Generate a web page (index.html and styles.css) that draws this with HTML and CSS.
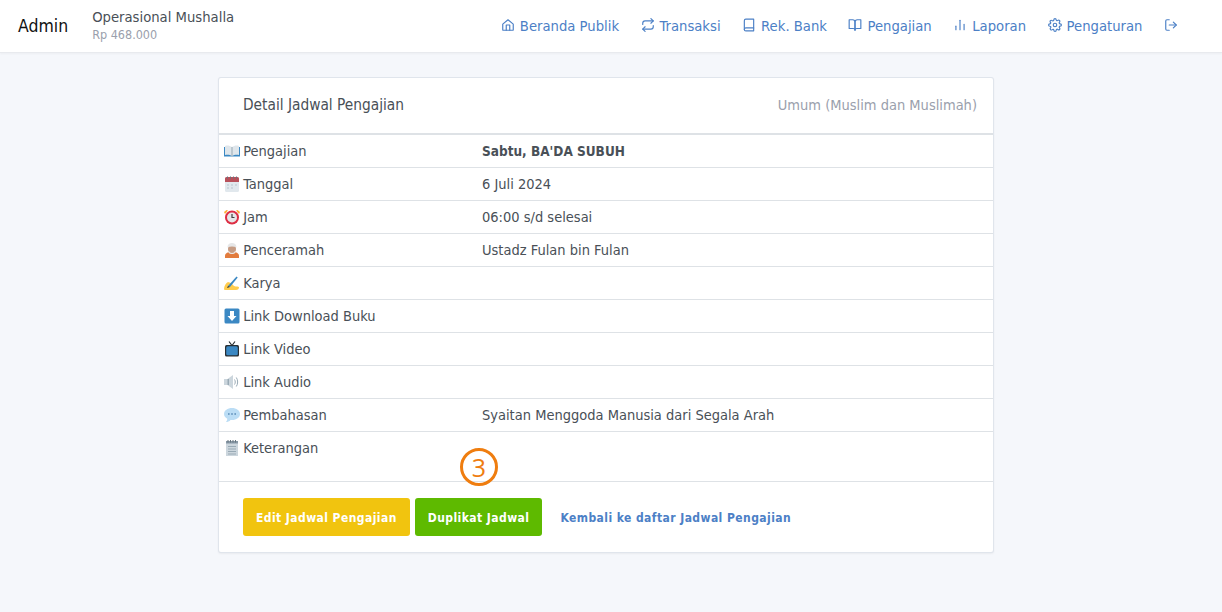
FILE: index.html
```html
<!DOCTYPE html>
<html lang="en">
  <head>
    <meta charset="UTF-8" />
    <title>Detail Jadwal Pengajian</title>
    <link rel="stylesheet" href="styles.css">
  </head>

  <body>
    <header class="topbar">
      <a class="brand">Admin</a>
      <div class="account">
        <div class="account-name">Operasional Mushalla</div>
        <div class="account-saldo">Rp 468.000</div>
      </div>
      <nav class="nav">
        <a class="nav-link">
          <svg class="ico" viewBox="0 0 24 24"><path d="M3 10.500 12 3l9 7.500V20a1 1 0 0 1-1 1H4a1 1 0 0 1-1-1z"/><path d="M9 21v-9h6v9"/></svg>
          Beranda Publik
        </a>
        <a class="nav-link">
          <svg class="ico" viewBox="0 0 24 24"><path d="m17 1 4 4-4 4"/><path d="M3 11V9a4 4 0 0 1 4-4h14"/><path d="m7 23-4-4 4-4"/><path d="M21 13v2a4 4 0 0 1-4 4H3"/></svg>
          Transaksi
        </a>
        <a class="nav-link">
          <svg class="ico" viewBox="0 0 24 24"><path d="M4 19.500A2.500 2.500 0 0 1 6.500 17H20"/><path d="M6.500 2H20v20H6.500A2.500 2.500 0 0 1 4 19.500v-15A2.500 2.500 0 0 1 6.500 2z"/></svg>
          Rek. Bank
        </a>
        <a class="nav-link">
          <svg class="ico" viewBox="0 0 24 24"><path d="M2 3h6a4 4 0 0 1 4 4v14a3 3 0 0 0-3-3H2z"/><path d="M22 3h-6a4 4 0 0 0-4 4v14a3 3 0 0 1 3-3h7z"/></svg>
          Pengajian
        </a>
        <a class="nav-link">
          <svg class="ico" viewBox="0 0 24 24"><path d="M12 20V4"/><path d="M19 20v-9"/><path d="M5 20v-6"/></svg>
          Laporan
        </a>
        <a class="nav-link">
          <svg class="ico" viewBox="0 0 24 24"><circle cx="12" cy="12" r="3"/><path d="M19.400 15a1.650 1.650 0 0 0 .33 1.820l.06.06a2 2 0 1 1-2.830 2.830l-.06-.06a1.650 1.650 0 0 0-2.820 1.170V21a2 2 0 1 1-4 0v-.09a1.650 1.650 0 0 0-2.820-1.110l-.06.06a2 2 0 1 1-2.830-2.830l.06-.06a1.650 1.650 0 0 0-1.170-2.820H3a2 2 0 1 1 0-4h.09a1.650 1.650 0 0 0 1.110-2.820l-.06-.06a2 2 0 1 1 2.830-2.830l.06.06a1.650 1.650 0 0 0 1.820.33H9a1.650 1.650 0 0 0 1-1.510V3a2 2 0 1 1 4 0v.09a1.650 1.650 0 0 0 2.820 1.110l.06-.06a2 2 0 1 1 2.830 2.830l-.06.06a1.650 1.650 0 0 0-.33 1.820V9a1.650 1.650 0 0 0 1.510 1H21a2 2 0 1 1 0 4h-.09a1.650 1.650 0 0 0-1.510 1z"/></svg>
          Pengaturan
        </a>
        <a class="nav-link">
          <svg class="ico" viewBox="0 0 24 24"><path d="M9 21H5a2 2 0 0 1-2-2V5a2 2 0 0 1 2-2h4"/><path d="m16 17 5-5-5-5"/><path d="M21 12H9"/></svg>
        </a>
      </nav>
    </header>

    <main class="page">
      <section class="card">
        <div class="card-header">
          <h3 class="card-title">Detail Jadwal Pengajian</h3>
          <div class="card-options">Umum (Muslim dan Muslimah)</div>
        </div>

        <table class="detail">
          <tr>
            <td class="label">
              <svg class="emoji" viewBox="0 0 16 16"><path fill="#3b88c3" d="M0 4h16v9.500H0z"/><path fill="#dfe6eb" d="M1 3c3-1 5 0 7 1 2-1 4-2 7-1v9c-3-.6-5 0-7 1-2-1-4-1.600-7-1z"/><path fill="#99aab5" d="M7.500 4h1v9h-1z"/></svg>
              Pengajian
            </td>
            <td><strong>Sabtu, BA'DA SUBUH</strong></td>
          </tr>
          <tr>
            <td class="label">
              <svg class="emoji" viewBox="0 0 16 16"><rect x="1" y="1" width="14" height="15" rx="1.500" fill="#e1e8ed"/><path fill="#b8505a" d="M1 2.500A1.500 1.500 0 0 1 2.500 1h11A1.500 1.500 0 0 1 15 2.500V6H1z"/><path fill="#ccd6dd" d="M3 8h2v2H3zm4 0h2v2H7zm4 0h2v2h-2zm-8 3h2v2H3zm4 0h2v2H7z"/><path fill="#66757f" d="M3 .500h1v2H3zm3 0h1v2H6zm3 0h1v2H9zm3 0h1v2h-1z"/></svg>
              Tanggal
            </td>
            <td>6 Juli 2024</td>
          </tr>
          <tr>
            <td class="label">
              <svg class="emoji" viewBox="0 0 16 16"><path fill="#ffac33" d="M1 5 4 1.500 2.500 1 0 3zm14 0-3-3.500L13.500 1 16 3z"/><circle cx="8" cy="8.500" r="7" fill="#dd2e44"/><circle cx="8" cy="8.500" r="5" fill="#e6e7e8"/><path fill="none" stroke="#414042" stroke-width="1.200" d="M8 5v3.500h2.500"/></svg>
              Jam
            </td>
            <td>06:00 s/d selesai</td>
          </tr>
          <tr>
            <td class="label">
              <svg class="emoji" viewBox="0 0 16 16"><path fill="#e27c3e" d="M1 16v-2c0-2.500 2-4 7-4s7 1.500 7 4v2z"/><circle cx="8" cy="7" r="4" fill="#c69c84"/><path fill="#e6e7e8" d="M3.500 5.500C3.500 2 6 1 8 1s4.500 1 4.500 4.500C10 4 6 4 3.500 5.500z"/><path fill="#e6e7e8" d="M5 9c1 2.500 5 2.500 6 0l.5 1.500c-1.500 2-5.500 2-7 0z"/></svg>
              Penceramah
            </td>
            <td>Ustadz Fulan bin Fulan</td>
          </tr>
          <tr>
            <td class="label">
              <svg class="emoji" viewBox="0 0 16 16"><path fill="#ffcc4d" d="M0 14c0-3 2-6 4-7l3 1 2 2c1 2 4 1 6 2 0 2-1 3-3 3H2c-1 0-2 0-2-1z"/><path fill="#3b88c3" d="M4 11 12.500 1.500l1.200 1L6 12z"/><path fill="#292f33" d="m3 13 1-2 2 1z"/></svg>
              Karya
            </td>
            <td></td>
          </tr>
          <tr>
            <td class="label">
              <svg class="emoji" viewBox="0 0 16 16"><rect width="15" height="15" x=".5" y=".5" rx="1.500" fill="#3b88c3"/><path fill="#fff" d="M6 3h4v5h2.500L8 13 3.500 8H6z"/></svg>
              Link Download Buku
            </td>
            <td></td>
          </tr>
          <tr>
            <td class="label">
              <svg class="emoji" viewBox="0 0 16 16"><path fill="none" stroke="#292f33" stroke-width="1.200" d="m5 .5 3 4 3-4"/><rect x="1" y="4" width="14" height="11.500" rx="1.500" fill="#292f33"/><rect x="2.200" y="5.200" width="11.600" height="9" rx="1.500" fill="#3b88c3"/></svg>
              Link Video
            </td>
            <td></td>
          </tr>
          <tr>
            <td class="label">
              <svg class="emoji" viewBox="0 0 16 16"><path fill="#ccd6dd" d="M0 5h3.500L9 1v14l-5.500-4H0z"/><path fill="#99aab5" d="M3.500 5H5v6H3.500z"/><path fill="none" stroke="#99aab5" d="M10.500 5.500c1 1.500 1 3.500 0 5m1.800-7c1.800 2.600 1.800 6.400 0 9"/></svg>
              Link Audio
            </td>
            <td></td>
          </tr>
          <tr>
            <td class="label">
              <svg class="emoji" viewBox="0 0 16 16"><path fill="#bbddf5" d="M8 1c4.400 0 8 2.500 8 6s-3.600 6-8 6l-1.500-.1C5.500 14.300 3.500 15 2 15c.8-.8 1.200-2 1.300-3.200C1.300 10.700 0 9 0 7c0-3.500 3.600-6 8-6z"/><path fill="#5b8db8" d="M4 6.200h1.600v1.600H4zm3.200 0h1.600v1.600H7.200zm3.200 0H12v1.600h-1.600z"/></svg>
              Pembahasan
            </td>
            <td>Syaitan Menggoda Manusia dari Segala Arah</td>
          </tr>
          <tr class="row-last">
            <td class="label">
              <svg class="emoji" viewBox="0 0 16 16"><rect x="2" y="1" width="12" height="15" fill="#ccd6dd"/><path fill="#8899a6" d="M2 1h12v2.500H2z"/><path fill="#66757f" d="M3.500 0h1v2.500h-1zm2.500 0h1v2.500H6zm2.500 0h1v2.500h-1zm2.500 0h1v2.500h-1z"/><path fill="#99aab5" d="M4 6h8v1H4zm0 2.500h8v1H4zm0 2.500h8v1H4zm0 2.500h8v1H4z"/></svg>
              Keterangan
            </td>
            <td></td>
          </tr>
        </table>

        <div class="card-footer">
          <a class="btn btn-yellow">Edit Jadwal Pengajian</a>
          <a class="btn btn-lime">Duplikat Jadwal</a>
          <a class="btn btn-link">Kembali ke daftar Jadwal Pengajian</a>
        </div>

        <span class="step-mark">3</span>
      </section>
    </main>
  </body>
</html>
```

FILE: styles.css
```css
html,
body {
  height: 100%;
  margin: 0;
  padding: 0;
}

body {
  background: #f5f7fb;
  color: #495057;
  font-family: "DejaVu Sans Condensed", "DejaVu Sans", sans-serif;
  font-stretch: condensed;
  font-size: 14.500px;
  line-height: 21px;
}

.topbar {
  display: flex;
  align-items: center;
  height: 53px;
  box-sizing: border-box;
  padding: 0 44px 0 18px;
  background: #fff;
  border-bottom: 1px solid #e8eaee;
  box-shadow: 0 1px 2px rgba(0, 0, 0, 0.04);
}

.brand {
  color: #111;
  font-size: 17.500px;
  margin-right: 24px;
}

.account-name {
  font-size: 14.700px;
  line-height: 18px;
}

.account-saldo {
  color: #9aa0ac;
  font-size: 12.500px;
  line-height: 18px;
}

.nav {
  display: flex;
  gap: 21.500px;
  margin-left: auto;
  padding-bottom: 2px;
}

.nav-link {
  display: flex;
  align-items: center;
  gap: 5px;
  color: #4c80c6;
  font-size: 14.700px;
}

.ico {
  width: 14px;
  height: 14px;
  fill: none;
  stroke: currentColor;
  stroke-width: 2;
  stroke-linecap: round;
  stroke-linejoin: round;
}

.page {
  padding: 24px 10px 0 0;
}

.card {
  position: relative;
  box-sizing: border-box;
  width: 776px;
  margin: 0 auto;
  background: #fff;
  border: 1px solid rgba(0, 40, 100, 0.12);
  border-radius: 3px;
  box-shadow: 0 1px 2px rgba(0, 0, 0, 0.05);
}

.card-header {
  display: flex;
  align-items: center;
  justify-content: space-between;
  height: 55px;
  padding: 0 16px 0 24px;
}

.card-title {
  margin: 0;
  font-size: 15.300px;
  font-weight: 400;
}

.card-options {
  color: #9aa0ac;
}

.detail {
  width: 100%;
  border-collapse: collapse;
  table-layout: fixed;
  border-top: 2px solid #dee2e6;
}

.detail td {
  height: 21px;
  padding: 6px 5px 5px;
  border-top: 1px solid #dee2e6;
  vertical-align: top;
}

.detail tr:first-child td {
  border-top: 0;
}

.detail .label {
  width: 248px;
}

.detail strong {
  font-size: 13.500px;
}

.row-last td {
  padding-bottom: 22px;
}

.emoji {
  display: inline-block;
  width: 16px;
  height: 16px;
  margin-right: -1px;
  vertical-align: -3px;
}

.card-footer {
  display: flex;
  align-items: center;
  gap: 5px;
  padding: 16px 24px;
  border-top: 1px solid #dee2e6;
}

.btn {
  display: block;
  padding: 2px 13px 0;
  line-height: 36px;
  border-radius: 3px;
  font-size: 12px;
  font-weight: 600;
  letter-spacing: 0.43px;
  color: #fff;
}

.btn-yellow {
  background: #f1c40f;
}

.btn-lime {
  background: #5eba00;
}

.btn-link {
  color: #4c80c6;
}

.step-mark {
  position: absolute;
  left: 241px;
  top: 370px;
  width: 32px;
  height: 32px;
  border: 3px solid #ef7d0f;
  border-radius: 50%;
  color: #ef7d0f;
  font-family: "Open Sans", sans-serif;
  font-stretch: normal;
  font-size: 25px;
  line-height: 32px;
  text-align: center;
}
```
